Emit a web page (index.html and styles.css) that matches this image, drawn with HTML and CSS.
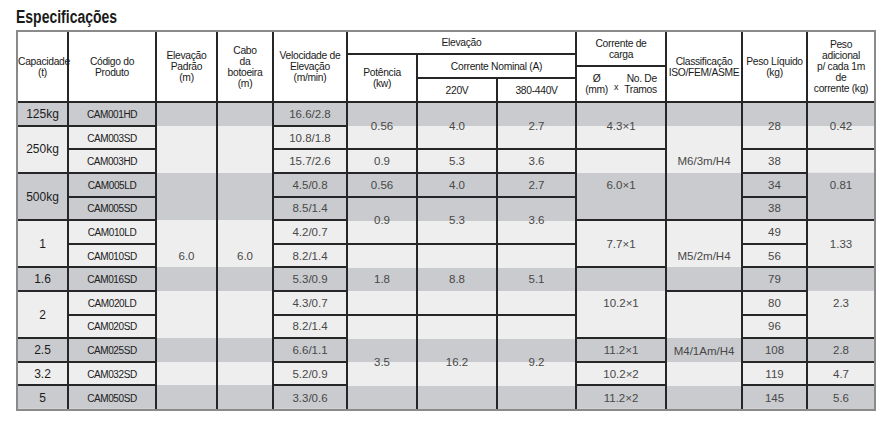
FILE: index.html
```
<!DOCTYPE html>
<html lang="pt">
<head>
<meta charset="utf-8">
<title>Especificações</title>
<link rel="stylesheet" href="styles.css">
</head>
<body>
<div class="page">
  <h1 class="title">Especificações</h1>
  <div class="frame">
    <table class="spec">
      <colgroup>
        <col class="w-cap"><col class="w-code"><col class="w-elev"><col class="w-cabo">
        <col class="w-vel"><col class="w-pot"><col class="w-220"><col class="w-380">
        <col class="w-cc"><col class="w-cls"><col class="w-peso"><col class="w-adic">
      </colgroup>
      <thead>
        <tr class="h1">
          <th rowspan="4">Capacidade<br>(t)</th>
          <th rowspan="4">Código do<br>Produto</th>
          <th rowspan="4">Elevação<br>Padrão<br>(m)</th>
          <th rowspan="4">Cabo<br>da<br>botoeira<br>(m)</th>
          <th rowspan="4">Velocidade de<br>Elevação<br>(m/min)</th>
          <th colspan="3">Elevação</th>
          <th rowspan="2">Corrente de<br>carga</th>
          <th rowspan="4">Classificação<br>ISO/FEM/ASME</th>
          <th rowspan="4">Peso Líquido<br>(kg)</th>
          <th rowspan="4">Peso<br>adicional<br>p/ cada 1m<br>de<br>corrente (kg)</th>
        </tr>
        <tr class="h2">
          <th rowspan="3">Potência<br>(kw)</th>
          <th colspan="2" rowspan="2">Corrente Nominal (A)</th>
        </tr>
        <tr class="h3">
          <th rowspan="2">
            <div class="chain">
              <span class="dia">Ø<br>(mm)</span>
              <span class="times">x</span>
              <span class="tramos">No. De<br>Tramos</span>
            </div>
          </th>
        </tr>
        <tr class="h4">
          <th>220V</th>
          <th>380-440V</th>
        </tr>
      </thead>
      <tbody>
        <tr>
          <td class="cap">125kg</td><td class="code">CAM001HD</td>
          <td rowspan="13">6.0</td><td rowspan="13">6.0</td>
          <td>16.6/2.8</td>
          <td rowspan="2">0.56</td><td rowspan="2">4.0</td><td rowspan="2">2.7</td>
          <td rowspan="2">4.3×1</td>
          <td rowspan="5">M6/3m/H4</td>
          <td rowspan="2">28</td><td rowspan="2">0.42</td>
        </tr>
        <tr>
          <td class="cap" rowspan="2">250kg</td><td class="code">CAM003SD</td>
          <td>10.8/1.8</td>
        </tr>
        <tr>
          <td class="code">CAM003HD</td>
          <td>15.7/2.6</td>
          <td>0.9</td><td>5.3</td><td>3.6</td>
          <td rowspan="3">6.0×1</td>
          <td>38</td><td rowspan="3">0.81</td>
        </tr>
        <tr>
          <td class="cap" rowspan="2">500kg</td><td class="code">CAM005LD</td>
          <td>4.5/0.8</td>
          <td>0.56</td><td>4.0</td><td>2.7</td>
          <td>34</td>
        </tr>
        <tr>
          <td class="code">CAM005SD</td>
          <td>8.5/1.4</td>
          <td rowspan="2">0.9</td><td rowspan="2">5.3</td><td rowspan="2">3.6</td>
          <td>38</td>
        </tr>
        <tr>
          <td class="cap" rowspan="2">1</td><td class="code">CAM010LD</td>
          <td>4.2/0.7</td>
          <td rowspan="2">7.7×1</td>
          <td rowspan="3">M5/2m/H4</td>
          <td>49</td><td rowspan="2">1.33</td>
        </tr>
        <tr>
          <td class="code">CAM010SD</td>
          <td>8.2/1.4</td>
          <td rowspan="3">1.8</td><td rowspan="3">8.8</td><td rowspan="3">5.1</td>
          <td>56</td>
        </tr>
        <tr>
          <td class="cap">1.6</td><td class="code">CAM016SD</td>
          <td>5.3/0.9</td>
          <td rowspan="3">10.2×1</td>
          <td>79</td><td rowspan="3">2.3</td>
        </tr>
        <tr>
          <td class="cap" rowspan="2">2</td><td class="code">CAM020LD</td>
          <td>4.3/0.7</td>
          <td rowspan="5">M4/1Am/H4</td>
          <td>80</td>
        </tr>
        <tr>
          <td class="code">CAM020SD</td>
          <td>8.2/1.4</td>
          <td rowspan="4">3.5</td><td rowspan="4">16.2</td><td rowspan="4">9.2</td>
          <td>96</td>
        </tr>
        <tr>
          <td class="cap">2.5</td><td class="code">CAM025SD</td>
          <td>6.6/1.1</td>
          <td>11.2×1</td>
          <td>108</td><td>2.8</td>
        </tr>
        <tr>
          <td class="cap">3.2</td><td class="code">CAM032SD</td>
          <td>5.2/0.9</td>
          <td>10.2×2</td>
          <td>119</td><td>4.7</td>
        </tr>
        <tr>
          <td class="cap">5</td><td class="code">CAM050SD</td>
          <td>3.3/0.6</td>
          <td>11.2×2</td>
          <td>145</td><td>5.6</td>
        </tr>
      </tbody>
    </table>
  </div>
</div>
</body>
</html>
```

FILE: styles.css
```
:root {
  --band-dark: #c9cbce;
  --band-light: #eeeeee;
  --line: #262626;
  --sans: "Liberation Sans", Arial, sans-serif;
}

body {
  margin: 0;
  background: #ffffff;
  font-family: var(--sans);
}

.page {
  padding: 7px 0 0 16px;
}

.title {
  margin: 0 0 3px;
  font: bold 18px/20px var(--sans);
  color: #1a1a1a;
  transform: scaleX(0.777);
  transform-origin: left center;
}

.frame {
  display: inline-block;
  border: 2px solid #8a8a8a;
}

.spec {
  border-collapse: collapse;
  border-style: hidden;
  table-layout: fixed;
  width: 856px;
}

.w-cap { width: 50px; }
.w-code { width: 88px; }
.w-elev { width: 61px; }
.w-cabo { width: 56px; }
.w-vel { width: 74px; }
.w-pot { width: 70px; }
.w-220 { width: 80px; }
.w-380 { width: 79px; }
.w-cc { width: 90px; }
.w-cls { width: 76px; }
.w-peso { width: 65px; }
.w-adic { width: 67px; }

.spec th,
.spec td {
  border: 2px solid var(--line);
  padding: 0;
  text-align: center;
  vertical-align: middle;
}

.spec thead th {
  background: #ffffff;
  font: normal 10.3px/11px var(--sans);
  letter-spacing: -0.3px;
  color: #1a1a1a;
  white-space: nowrap;
}

.h1 { height: 22px; }
.h2 { height: 12px; }
.h3 { height: 12px; }
.h4 { height: 24.3px; }

.spec tbody tr { height: 23.6px; }

.spec tbody {
  background: linear-gradient(to bottom,
    var(--band-dark) 0 7.692%,
    var(--band-light) 7.692% 23.077%,
    var(--band-dark) 23.077% 38.462%,
    var(--band-light) 38.462% 53.846%,
    var(--band-dark) 53.846% 61.538%,
    var(--band-light) 61.538% 76.923%,
    var(--band-dark) 76.923% 84.615%,
    var(--band-light) 84.615% 92.308%,
    var(--band-dark) 92.308% 100%);
}

.spec td {
  font-size: 11.5px;
  line-height: 14px;
  color: #484848;
}

.spec td.cap {
  font-size: 12px;
  color: #1c1c1c;
}

.spec td.code {
  font-size: 10px;
  letter-spacing: -0.4px;
  padding-top: 2px;
  color: #202020;
}

.chain {
  display: flex;
  justify-content: center;
  align-items: flex-start;
  gap: 6px;
}

.dia { text-align: center; }
.tramos { text-align: right; }
.times {
  font-size: 9px;
  padding-top: 9px;
}
```
